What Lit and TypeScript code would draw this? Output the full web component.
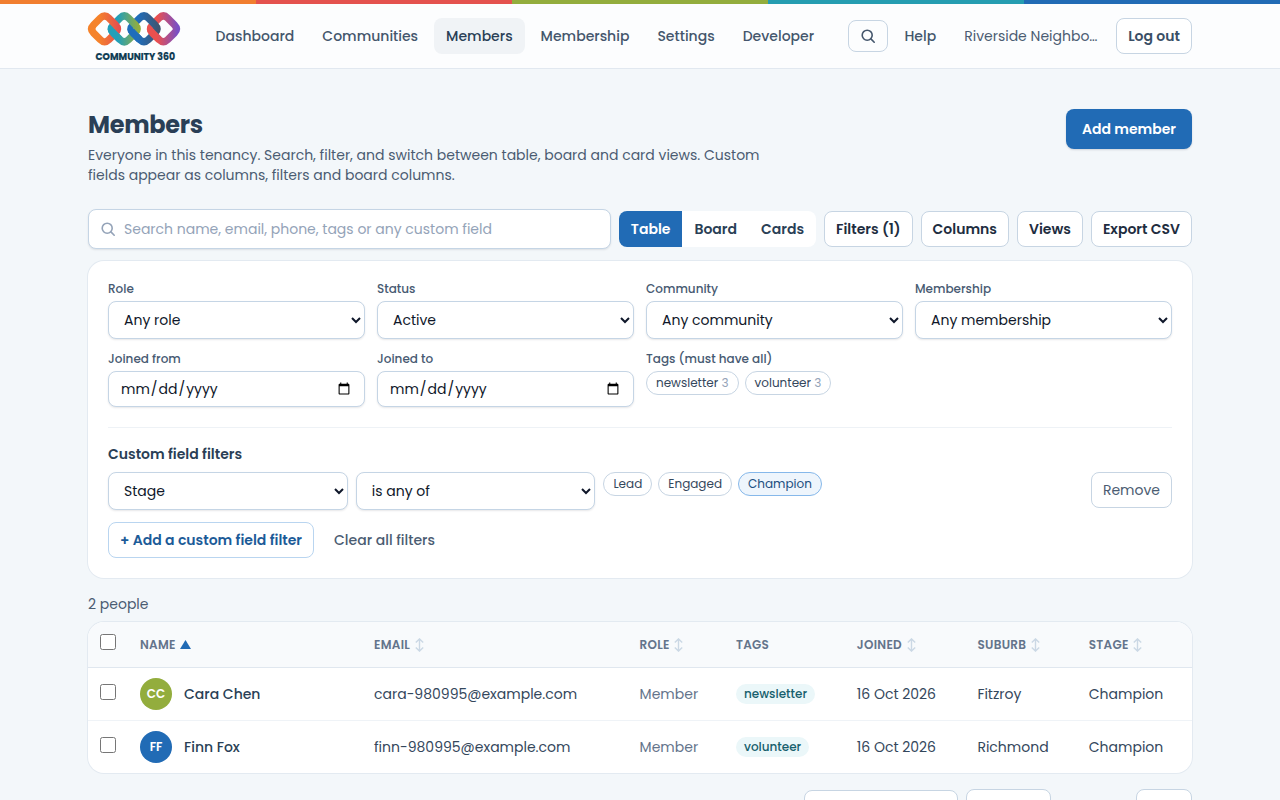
import { LitElement, html, svg, css } from "lit";
import { customElement, property, state } from "lit/decorators.js";
import { classMap } from "lit/directives/class-map.js";

interface Member {
  name: string;
  initials: string;
  tone: string;
  email: string;
  role: string;
  tag: string;
  joined: string;
  suburb: string;
  stage: string;
}

const MEMBERS: Member[] = [
  {
    name: "Cara Chen",
    initials: "CC",
    tone: "green",
    email: "cara-980995@example.com",
    role: "Member",
    tag: "newsletter",
    joined: "16 Oct 2026",
    suburb: "Fitzroy",
    stage: "Champion",
  },
  {
    name: "Finn Fox",
    initials: "FF",
    tone: "blue",
    email: "finn-980995@example.com",
    role: "Member",
    tag: "volunteer",
    joined: "16 Oct 2026",
    suburb: "Richmond",
    stage: "Champion",
  },
];

const searchIcon = html`
  <svg class="search-icon" viewBox="0 0 16 16" fill="none" stroke="currentColor" stroke-width="1.6" stroke-linecap="round">
    <circle cx="7.2" cy="7.2" r="5"></circle>
    <path d="M10.9 10.9 14.2 14.2"></path>
  </svg>
`;

@customElement("brand-logo")
export class BrandLogo extends LitElement {
  static styles = css`
    :host {
      display: block;
      width: 92px;
      height: 48px;
    }

    svg {
      display: block;
      overflow: visible;
    }

    text {
      font-family: Poppins, Inter, sans-serif;
      font-weight: 700;
      font-size: 9.6px;
      fill: #0d3b52;
      stroke: #0d3b52;
      stroke-width: 0.2px;
    }
  `;

  // centre x, start colour, end colour of every link in the chain
  links: [number, string, string][] = [
    [16.6, "#f5832b", "#e5504f"],
    [36.3, "#229fb8", "#93ad3f"],
    [56, "#1f6dbb", "#3f5672"],
    [75.4, "#ea504f", "#7a4fc4"],
  ];

  render() {
    return html`
      <svg width="92" height="48" viewBox="0 0 92 48" fill="none" stroke-width="7.2">
        <defs>
          ${this.links.map(
            ([cx, from, to], i) => svg`
              <linearGradient id="g${i}" gradientUnits="userSpaceOnUse" x1="${cx - 13}" y1="17" x2="${cx + 14}" y2="17">
                <stop offset="0.25" stop-color="${from}"></stop>
                <stop offset="1" stop-color="${to}"></stop>
              </linearGradient>`
          )}
        </defs>
        ${[...this.links.keys()].reverse().map((i) => {
          const cx = this.links[i][0];
          return svg`<path stroke="url(#g${i})" d="M${cx - 4.2} 6 Q${cx} 1.8 ${cx + 4.2} 6 L${cx + 10.9} 12.7 Q${cx + 15.1} 16.9 ${cx + 10.9} 21.1 L${cx + 4.2} 27.8 Q${cx} 32 ${cx - 4.2} 27.8 L${cx - 10.9} 21.1 Q${cx - 15.1} 16.9 ${cx - 10.9} 12.7 Z"></path>`;
        })}
        ${this.links.slice(1).map(
          ([cx], i) =>
            // lower left arm goes back over the previous link
            svg`<path stroke="url(#g${i + 1})" d="M${cx - 13} 16.9 Q${cx - 13} 19 ${cx - 10.9} 21.1 L${cx - 4.2} 27.8"></path>`
        )}
        <text x="7.5" y="47.6" textLength="79.5" lengthAdjust="spacingAndGlyphs">COMMUNITY 360</text>
      </svg>
    `;
  }
}

@customElement("app-header")
export class AppHeader extends LitElement {
  static styles = css`
    :host {
      display: block;
      background: #fcfdfe;
      border-bottom: 1px solid #e1e8f0;
    }

    .stripes {
      display: grid;
      grid-template-columns: repeat(5, 1fr);
      height: 4px;
    }

    .orange { background: #f17e30; }
    .red { background: #e4524e; }
    .green { background: #93ad3d; }
    .teal { background: #259db1; }
    .blue { background: #216bb5; }

    .bar {
      display: flex;
      align-items: center;
      box-sizing: border-box;
      width: 1104px;
      height: 64px;
      margin: 0 auto;
    }

    nav {
      display: flex;
      gap: 4px;
      margin-left: 23.6px;
    }

    a {
      box-sizing: border-box;
      height: 36px;
      padding: 0 12px;
      line-height: 36px;
      border-radius: 8px;
      color: #44566c;
      font-weight: 500;
      white-space: nowrap;
    }

    a.current {
      background: #f0f3f6;
      color: #2a3f56;
    }

    .search {
      display: grid;
      place-items: center;
      box-sizing: border-box;
      width: 40px;
      height: 32px;
      margin-left: auto;
      border: 1px solid #c7d5e3;
      border-radius: 8px;
      color: #44566c;
    }

    .search-icon {
      width: 16px;
      height: 16px;
    }

    .help {
      margin-left: 4px;
    }

    .tenant {
      box-sizing: border-box;
      width: 160px;
      padding: 0 12px;
      margin: 0 4px;
      color: #4b5c72;
      white-space: nowrap;
    }

    .logout {
      box-sizing: border-box;
      height: 36px;
      padding: 0 11px;
      line-height: 34px;
      border: 1px solid #c7d5e3;
      border-radius: 8px;
      background: #fff;
      color: #3a4f66;
      font-weight: 600;
    }
  `;

  @property() current = "Members";

  pages = ["Dashboard", "Communities", "Members", "Membership", "Settings", "Developer"];

  render() {
    return html`
      <div class="stripes">
        ${["orange", "red", "green", "teal", "blue"].map((c) => html`<div class=${c}></div>`)}
      </div>
      <div class="bar">
        <brand-logo></brand-logo>
        <nav>
          ${this.pages.map(
            (page) => html`<a class=${classMap({ current: page === this.current })}>${page}</a>`
          )}
        </nav>
        <div class="search">${searchIcon}</div>
        <a class="help">Help</a>
        <div class="tenant">Riverside Neighbo…</div>
        <div class="logout">Log out</div>
      </div>
    `;
  }
}

@customElement("filter-panel")
export class FilterPanel extends LitElement {
  static styles = css`
    :host {
      display: block;
      box-sizing: border-box;
      padding: 20px;
      border-radius: 16px;
      background: #fff;
      box-shadow: 0 0 0 1px #e3eaf1;
    }

    .fields {
      display: grid;
      grid-template-columns: repeat(4, 1fr);
      gap: 12px;
      align-items: start;
    }

    label {
      display: block;
    }

    .caption {
      display: block;
      height: 16px;
      margin-bottom: 4px;
      font-size: 12px;
      line-height: 16px;
      font-weight: 500;
      color: #475a72;
    }

    select,
    input {
      display: block;
      box-sizing: border-box;
      width: 100%;
      margin: 0;
      border: 1px solid #c5d5e5;
      border-radius: 8px;
      background: #fff;
      box-shadow: 0 1px 2px rgba(15, 23, 42, 0.1);
      color: #0f172a;
      font-family: inherit;
      font-size: 14px;
    }

    select {
      height: 38px;
      padding: 0 0 0 11px;
    }

    input {
      height: 36px;
      padding: 0 11px;
    }

    .chips {
      display: flex;
      gap: 6px;
    }

    .chip {
      box-sizing: border-box;
      height: 24px;
      padding: 0 9px;
      border: 1px solid #c7d5e3;
      border-radius: 12px;
      font-size: 12px;
      line-height: 22px;
      color: #34475c;
      white-space: nowrap;
    }

    .chip.on {
      border-color: #86b8ea;
      background: #eef5fc;
      color: #1d4f80;
    }

    .count {
      color: #94a3b8;
    }

    .custom {
      margin-top: 20px;
      padding-top: 16px;
      border-top: 1px solid #eef2f6;
    }

    .heading {
      height: 20px;
      margin-bottom: 8px;
      line-height: 20px;
      font-weight: 600;
      color: #2a3f56;
    }

    .rule {
      display: grid;
      grid-template-columns: 1fr 1fr 2fr auto;
      gap: 8px;
      align-items: start;
    }

    .button {
      box-sizing: border-box;
      height: 36px;
      padding: 0 11px;
      line-height: 34px;
      border: 1px solid #c7d5e3;
      border-radius: 8px;
      color: #4b5c72;
    }

    .actions {
      display: flex;
      gap: 20px;
      margin-top: 12px;
    }

    .add {
      border-color: #b9d5f0;
      color: #1c5b98;
      font-weight: 600;
    }

    .clear {
      line-height: 36px;
      font-weight: 500;
      color: #4b5c72;
    }
  `;

  @property({ attribute: false }) stages: string[] = ["Champion"];

  select(value: string) {
    return html`<select><option>${value}</option></select>`;
  }

  render() {
    return html`
      <div class="fields">
        <label><span class="caption">Role</span>${this.select("Any role")}</label>
        <label><span class="caption">Status</span>${this.select("Active")}</label>
        <label><span class="caption">Community</span>${this.select("Any community")}</label>
        <label><span class="caption">Membership</span>${this.select("Any membership")}</label>
        <label><span class="caption">Joined from</span><input type="date" /></label>
        <label><span class="caption">Joined to</span><input type="date" /></label>
        <div>
          <span class="caption">Tags (must have all)</span>
          <div class="chips">
            <span class="chip">newsletter <span class="count">3</span></span>
            <span class="chip">volunteer <span class="count">3</span></span>
          </div>
        </div>
      </div>
      <div class="custom">
        <div class="heading">Custom field filters</div>
        <div class="rule">
          ${this.select("Stage")} ${this.select("is any of")}
          <div class="chips">
            ${["Lead", "Engaged", "Champion"].map(
              (s) => html`<span class=${classMap({ chip: true, on: this.stages.includes(s) })}>${s}</span>`
            )}
          </div>
          <div class="button">Remove</div>
        </div>
        <div class="actions">
          <div class="button add">+ Add a custom field filter</div>
          <div class="clear">Clear all filters</div>
        </div>
      </div>
    `;
  }
}

@customElement("member-table")
export class MemberTable extends LitElement {
  static styles = css`
    :host {
      display: block;
      border-radius: 16px;
      background: #fff;
      box-shadow: 0 0 0 1px #e3eaf1;
      overflow: hidden;
    }

    .row {
      display: grid;
      grid-template-columns: 40px 234px 265.6px 96.4px 120.8px 120.6px 111.4px 1fr;
      align-items: center;
      height: 52px;
      border-bottom: 1px solid #eff3f7;
      color: #34475c;
    }

    .row:last-child {
      border-bottom: 0;
    }

    .row > * {
      padding-left: 12px;
      white-space: nowrap;
    }

    .head {
      height: 45px;
      border-bottom-color: #e0e7ef;
      background: #f8fafc;
      color: #64748b;
      font-size: 12px;
      font-weight: 600;
      letter-spacing: 0.3px;
    }

    .check {
      padding-bottom: 4px;
    }

    .head .check {
      padding-bottom: 5px;
    }

    input {
      display: block;
      width: 16px;
      height: 16px;
      margin: 0;
    }

    .title,
    .person {
      display: flex;
      align-items: center;
    }

    .title {
      gap: 4.5px;
    }

    .sort {
      width: 9px;
      height: 14px;
      fill: none;
      stroke: #cbd8e5;
      stroke-width: 1.4;
    }

    .sorted {
      width: 11px;
      height: 9px;
      fill: #216bb5;
    }

    .person {
      gap: 12px;
      color: #2a3f56;
      font-weight: 500;
    }

    .avatar {
      width: 32px;
      height: 32px;
      border-radius: 50%;
      color: #fff;
      font-size: 12px;
      line-height: 32px;
      font-weight: 600;
      text-align: center;
    }

    .green { background: #93ad3d; }
    .blue { background: #216bb5; }

    .role {
      color: #64748b;
    }

    .tag {
      display: block;
      width: fit-content;
      height: 20px;
      padding: 0 8px;
      border-radius: 10px;
      background: #ebf7f9;
      color: #17606d;
      font-size: 12px;
      line-height: 20px;
      font-weight: 500;
    }
  `;

  @property({ attribute: false }) members: Member[] = [];

  sortIcon = html`<svg class="sort" viewBox="0 0 9 14"><path d="M4.5 1V13M.8 4.4 4.5 .9 8.2 4.4M.8 9.6 4.5 13.1 8.2 9.6"></path></svg>`;

  render() {
    return html`
      <div class="row head">
        <div class="check"><input type="checkbox" /></div>
        <div class="title">NAME<svg class="sorted" viewBox="0 0 11 9"><path d="M5.5 0 11 9H0Z"></path></svg></div>
        <div class="title">EMAIL${this.sortIcon}</div>
        <div class="title">ROLE${this.sortIcon}</div>
        <div class="title">TAGS</div>
        <div class="title">JOINED${this.sortIcon}</div>
        <div class="title">SUBURB${this.sortIcon}</div>
        <div class="title">STAGE${this.sortIcon}</div>
      </div>
      ${this.members.map(
        (m) => html`
          <div class="row">
            <div class="check"><input type="checkbox" /></div>
            <div class="person"><span class="avatar ${m.tone}">${m.initials}</span><span>${m.name}</span></div>
            <div>${m.email}</div>
            <div class="role">${m.role}</div>
            <div><span class="tag">${m.tag}</span></div>
            <div>${m.joined}</div>
            <div>${m.suburb}</div>
            <div>${m.stage}</div>
          </div>
        `
      )}
    `;
  }
}

@customElement("app-root")
export class AppRoot extends LitElement {
  static styles = css`
    :host {
      display: block;
      height: 800px;
      overflow: hidden;
      background: #f3f7fa;
      font-family: Poppins, Inter, sans-serif;
      font-size: 14px;
      line-height: 20px;
    }

    main {
      width: 1104px;
      margin: 0 auto;
      padding-top: 40px;
    }

    .intro {
      display: flex;
      justify-content: space-between;
      align-items: flex-start;
      margin-bottom: 24px;
    }

    h1 {
      margin: 0 0 4px;
      font-size: 24px;
      line-height: 32px;
      font-weight: 700;
      letter-spacing: -0.3px;
      color: #2a3f56;
    }

    p {
      width: 672px;
      margin: 0;
      color: #4b5c72;
    }

    .add {
      height: 40px;
      padding: 0 16px;
      border-radius: 8px;
      background: #216bb5;
      box-shadow: 0 1px 2px rgba(15, 23, 42, 0.15);
      color: #fff;
      line-height: 40px;
      font-weight: 600;
    }

    .toolbar {
      display: flex;
      align-items: center;
      gap: 8px;
      margin-bottom: 12px;
    }

    .search {
      display: flex;
      flex: 1;
      align-items: center;
      gap: 8px;
      box-sizing: border-box;
      height: 40px;
      padding-left: 11px;
      border: 1px solid #c5d5e5;
      border-radius: 8px;
      background: #fff;
      box-shadow: 0 1px 2px rgba(15, 23, 42, 0.1);
      color: #94a3b8;
    }

    .search-icon {
      width: 16px;
      height: 16px;
    }

    .views {
      display: flex;
      height: 36px;
      border-radius: 8px;
      overflow: hidden;
      background: #fff;
      color: #2a3f56;
      line-height: 36px;
      font-weight: 600;
    }

    .views div {
      padding: 0 12px;
    }

    .views .active {
      background: #216bb5;
      color: #fff;
    }

    .button {
      box-sizing: border-box;
      height: 36px;
      padding: 0 11px;
      border: 1px solid #c7d5e3;
      border-radius: 8px;
      background: #fff;
      color: #1e2d40;
      line-height: 34px;
      font-weight: 600;
    }

    .total {
      margin: 16px 0 8px;
      color: #4b5c72;
    }

    .pager {
      display: flex;
      align-items: center;
      gap: 8px;
      height: 40px;
      margin-top: 16px;
    }

    .size,
    .previous,
    .next {
      box-sizing: border-box;
      height: 40px;
      border: 1px solid #c7d5e3;
      border-radius: 8px;
      background: #fff;
    }

    .size {
      width: 154px;
      height: 38px;
      margin-left: auto;
    }

    .previous {
      width: 85px;
    }

    .next {
      width: 56px;
      margin-left: 77px;
    }
  `;

  @state() view = "Table";

  render() {
    return html`
      <app-header current="Members"></app-header>
      <main>
        <div class="intro">
          <div>
            <h1>Members</h1>
            <p>
              Everyone in this tenancy. Search, filter, and switch between table, board and card views. Custom
              fields appear as columns, filters and board columns.
            </p>
          </div>
          <div class="add">Add member</div>
        </div>
        <div class="toolbar">
          <div class="search">${searchIcon}<span>Search name, email, phone, tags or any custom field</span></div>
          <div class="views">
            ${["Table", "Board", "Cards"].map(
              (v) => html`<div class=${classMap({ active: v === this.view })} @click=${() => (this.view = v)}>${v}</div>`
            )}
          </div>
          ${["Filters (1)", "Columns", "Views", "Export CSV"].map((b) => html`<div class="button">${b}</div>`)}
        </div>
        <filter-panel></filter-panel>
        <div class="total">2 people</div>
        <member-table .members=${MEMBERS}></member-table>
        <div class="pager">
          <div class="size"></div>
          <div class="previous"></div>
          <div class="next"></div>
        </div>
      </main>
    `;
  }
}
